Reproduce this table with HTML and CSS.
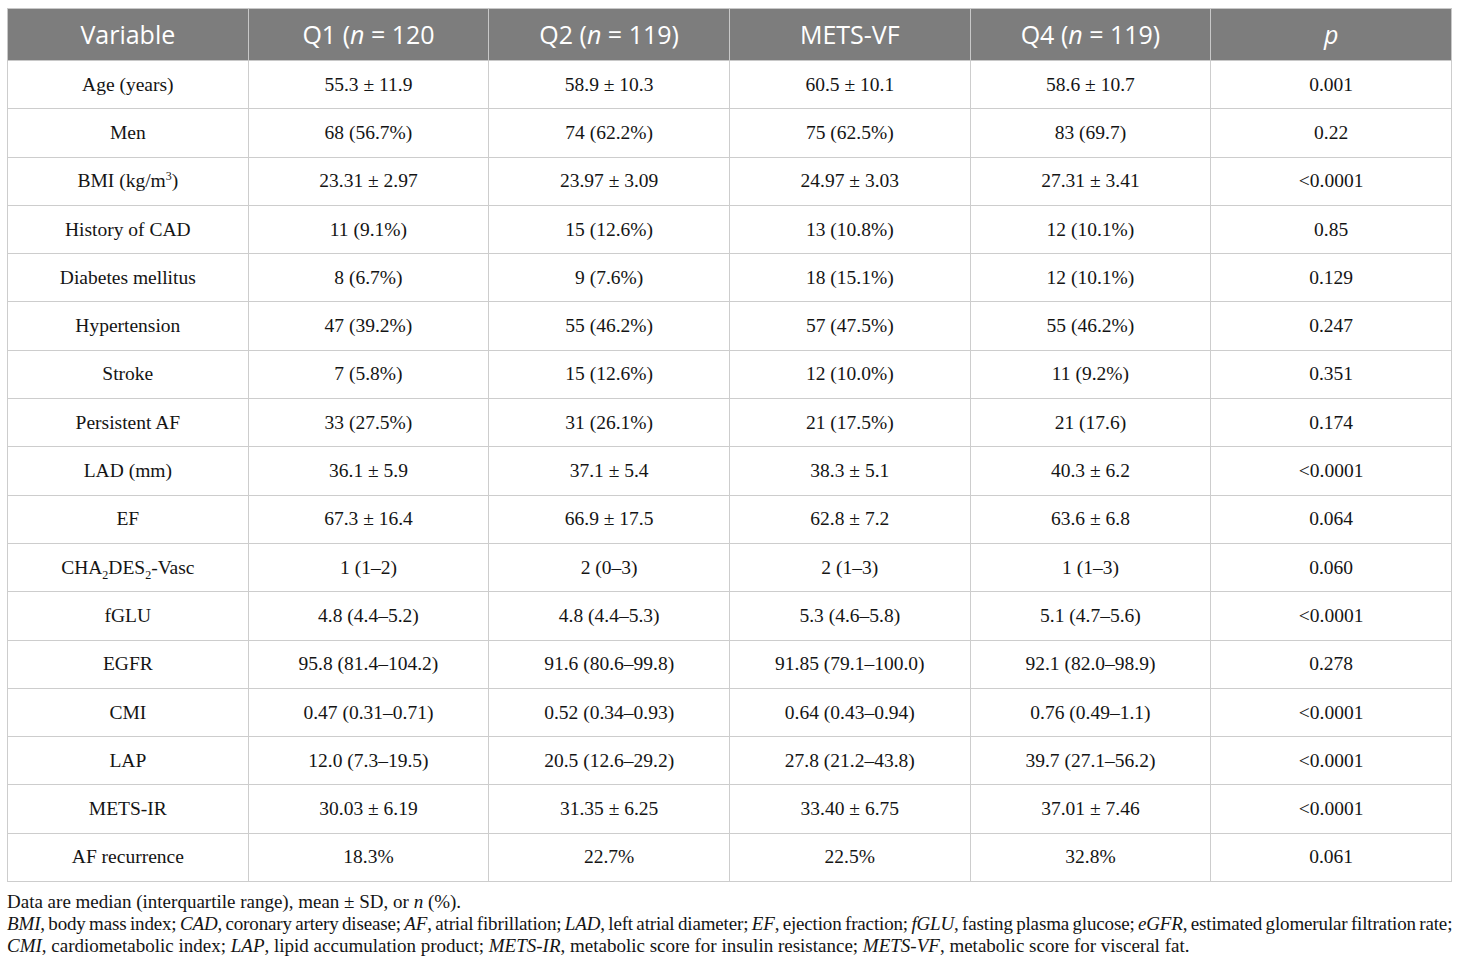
FILE: index.html
```html
<!DOCTYPE html>
<html lang="en">
<head>
    <meta charset="UTF-8">
    <meta name="viewport" content="width=device-width, initial-scale=1.0">
    <title>Table 1</title>
    <link rel="stylesheet" href="styles.css">
</head>
<body>
    <div class="wrap">
        <table class="data-table">
            <thead>
                <tr>
                    <th>Variable</th>
                    <th>Q1 (<i>n</i> = 120</th>
                    <th>Q2 (<i>n</i> = 119)</th>
                    <th>METS-VF</th>
                    <th>Q4 (<i>n</i> = 119)</th>
                    <th><i>p</i></th>
                </tr>
            </thead>
            <tbody>
                <tr><td>Age (years)</td><td>55.3 ± 11.9</td><td>58.9 ± 10.3</td><td>60.5 ± 10.1</td><td>58.6 ± 10.7</td><td>0.001</td></tr>
                <tr><td>Men</td><td>68 (56.7%)</td><td>74 (62.2%)</td><td>75 (62.5%)</td><td>83 (69.7)</td><td>0.22</td></tr>
                <tr><td>BMI (kg/m<sup>3</sup>)</td><td>23.31 ± 2.97</td><td>23.97 ± 3.09</td><td>24.97 ± 3.03</td><td>27.31 ± 3.41</td><td>&lt;0.0001</td></tr>
                <tr><td>History of CAD</td><td>11 (9.1%)</td><td>15 (12.6%)</td><td>13 (10.8%)</td><td>12 (10.1%)</td><td>0.85</td></tr>
                <tr><td>Diabetes mellitus</td><td>8 (6.7%)</td><td>9 (7.6%)</td><td>18 (15.1%)</td><td>12 (10.1%)</td><td>0.129</td></tr>
                <tr><td>Hypertension</td><td>47 (39.2%)</td><td>55 (46.2%)</td><td>57 (47.5%)</td><td>55 (46.2%)</td><td>0.247</td></tr>
                <tr><td>Stroke</td><td>7 (5.8%)</td><td>15 (12.6%)</td><td>12 (10.0%)</td><td>11 (9.2%)</td><td>0.351</td></tr>
                <tr><td>Persistent AF</td><td>33 (27.5%)</td><td>31 (26.1%)</td><td>21 (17.5%)</td><td>21 (17.6)</td><td>0.174</td></tr>
                <tr><td>LAD (mm)</td><td>36.1 ± 5.9</td><td>37.1 ± 5.4</td><td>38.3 ± 5.1</td><td>40.3 ± 6.2</td><td>&lt;0.0001</td></tr>
                <tr><td>EF</td><td>67.3 ± 16.4</td><td>66.9 ± 17.5</td><td>62.8 ± 7.2</td><td>63.6 ± 6.8</td><td>0.064</td></tr>
                <tr><td>CHA<sub>2</sub>DES<sub>2</sub>-Vasc</td><td>1 (1–2)</td><td>2 (0–3)</td><td>2 (1–3)</td><td>1 (1–3)</td><td>0.060</td></tr>
                <tr><td>fGLU</td><td>4.8 (4.4–5.2)</td><td>4.8 (4.4–5.3)</td><td>5.3 (4.6–5.8)</td><td>5.1 (4.7–5.6)</td><td>&lt;0.0001</td></tr>
                <tr><td>EGFR</td><td>95.8 (81.4–104.2)</td><td>91.6 (80.6–99.8)</td><td>91.85 (79.1–100.0)</td><td>92.1 (82.0–98.9)</td><td>0.278</td></tr>
                <tr><td>CMI</td><td>0.47 (0.31–0.71)</td><td>0.52 (0.34–0.93)</td><td>0.64 (0.43–0.94)</td><td>0.76 (0.49–1.1)</td><td>&lt;0.0001</td></tr>
                <tr><td>LAP</td><td>12.0 (7.3–19.5)</td><td>20.5 (12.6–29.2)</td><td>27.8 (21.2–43.8)</td><td>39.7 (27.1–56.2)</td><td>&lt;0.0001</td></tr>
                <tr><td>METS-IR</td><td>30.03 ± 6.19</td><td>31.35 ± 6.25</td><td>33.40 ± 6.75</td><td>37.01 ± 7.46</td><td>&lt;0.0001</td></tr>
                <tr><td>AF recurrence</td><td>18.3%</td><td>22.7%</td><td>22.5%</td><td>32.8%</td><td>0.061</td></tr>
            </tbody>
        </table>
        <div class="notes">
            <p>Data are median (interquartile range), mean ± SD, or <i>n</i> (%).</p>
            <p class="tight"><i>BMI</i>, body mass index; <i>CAD</i>, coronary artery disease; <i>AF</i>, atrial fibrillation; <i>LAD</i>, left atrial diameter; <i>EF</i>, ejection fraction; <i>fGLU</i>, fasting plasma glucose; <i>eGFR</i>, estimated glomerular filtration rate;</p>
            <p><i>CMI</i>, cardiometabolic index; <i>LAP</i>, lipid accumulation product; <i>METS-IR</i>, metabolic score for insulin resistance; <i>METS-VF</i>, metabolic score for visceral fat.</p>
        </div>
    </div>
</body>
</html>
```

FILE: styles.css
```css
body {
    margin: 0;
    background-color: #fff;
    color: #141414;
    font-family: "Liberation Serif", "Times New Roman", serif;
}

.wrap {
    padding: 8px 8px 0 7px;
}

.data-table {
    width: 1445px;
    border-collapse: collapse;
    table-layout: fixed;
}

.data-table th {
    height: 50px;
    padding: 0 8px 1px;
    background-color: #7d7d7d;
    color: #fff;
    font-family: "Open Sans", "Noto Sans", sans-serif;
    font-size: 25px;
    font-weight: normal;
    text-align: center;
    border: 1px solid #c8c8c8;
}

.data-table td {
    height: 47.3px;
    padding: 0 8px;
    font-size: 19.5px;
    text-align: center;
    border: 1px solid #cdcdcd;
}

.data-table sup,
.data-table sub {
    font-size: 12px;
    line-height: 0;
}

.notes {
    margin-top: 9px;
    font-size: 19px;
    line-height: 22px;
}

.notes p {
    margin: 0;
    white-space: nowrap;
}

.notes .tight {
    letter-spacing: -0.15px;
    word-spacing: -1.2px;
}
```
